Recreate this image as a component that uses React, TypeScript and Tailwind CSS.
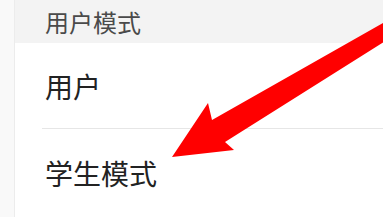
export default function App() {
  return (
    <div className="relative flex h-[217px] w-[383px] overflow-hidden bg-white font-['Noto_Sans_CJK_SC','Noto_Sans',sans-serif]">
      {/* left rail */}
      <div className="w-[15px] shrink-0 border-r border-[#ececec] bg-[#f9f9f9]" />

      <div className="flex flex-1 flex-col">
        <div className="flex h-[47px] items-center bg-[#f3f3f3] pl-[30px] text-[24px] leading-none text-[#4a4a4a]">
          用户模式
        </div>
        <div className="flex flex-col bg-white">
          <div className="flex h-[85px] items-center pl-[30px] text-[28px] leading-none text-[#222]">用户</div>
          <div className="ml-[27px] h-px bg-[#e6e6e6]" />
          <div className="flex h-[88px] items-center pl-[30px] text-[28px] leading-none text-[#222]">学生模式</div>
        </div>
      </div>

      {/* annotation arrow */}
      <svg className="pointer-events-none absolute inset-0" width="383" height="217" viewBox="0 0 383 217">
        <polygon
          points="172,157 208,103 212,120 390,19 390,38 225,142 234,150"
          fill="#ff0000"
        />
      </svg>
    </div>
  );
}
